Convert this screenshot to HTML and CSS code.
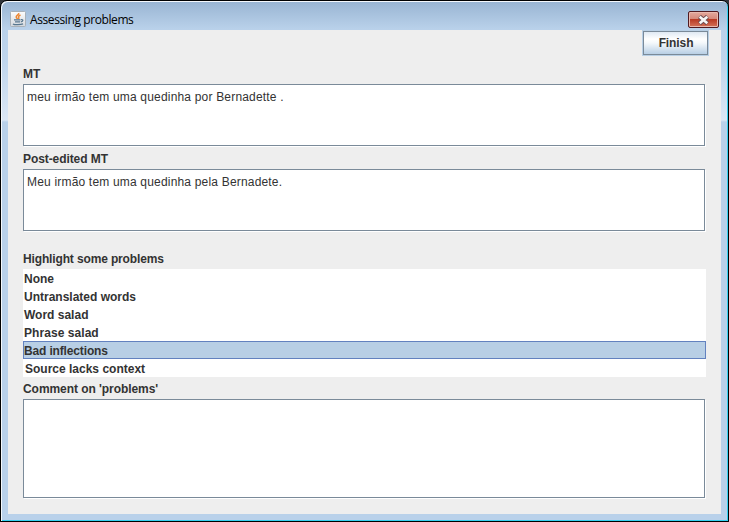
FILE: index.html
```html
<!DOCTYPE html>
<html lang="en">
<head>
<meta charset="utf-8">
<title>Assessing problems</title>
<link rel="stylesheet" href="styles.css">
</head>
<body>
<div class="window">
  <header class="titlebar">
    <svg class="app-icon" width="16" height="16" viewBox="0 0 16 16">
      <defs><linearGradient id="tile" x1="0" y1="0" x2="0" y2="1"><stop offset="0" stop-color="#fdfdfd"/><stop offset="1" stop-color="#d3d8dd"/></linearGradient></defs>
      <rect x=".5" y=".5" width="15" height="15" rx="1" fill="url(#tile)" stroke="#a9b1b8"/>
      <path d="M8.700 2c.7 1.700-3 2.500-2.500 4 .2.900 1 1.300 1.300 2M10.500 4c-1.700.8-2.500 1.500-1.700 2.700.3.500 0 .9-.4 1.300" fill="none" stroke="#ed8732" stroke-width="1.500"/>
      <path d="M4 8.900h6.500M5 10.900h5M11 8.600c2.600-.3 2.300 2-.2 2.300M3 12.900c1 .9 8 .9 10 0" fill="none" stroke="#58778f" stroke-width="1.300"/>
    </svg>
    <h1 class="title">Assessing problems</h1>
    <button class="close" aria-label="Close">
      <svg width="13" height="10" viewBox="0 0 13 10"><path d="M2.500 1.500 10.500 8.500M10.500 1.500 2.500 8.500" stroke="#6a4a50" stroke-width="4.400"/><path d="M2.700 1.700 10.300 8.300M10.300 1.700 2.700 8.300" stroke="#f6f6f6" stroke-width="2.600"/></svg>
    </button>
  </header>
  <main class="content">
    <div class="toolbar"><button class="finish"><span>Finish</span></button></div>
    <h2 class="label mt-label">MT</h2>
    <div class="field"><p class="mt-text">meu irmão tem uma quedinha por Bernadette .</p></div>
    <h2 class="label edited-label">Post-edited MT</h2>
    <div class="field"><p class="edited-text">Meu irmão tem uma quedinha pela Bernadete.</p></div>
    <h2 class="label list-label">Highlight some problems</h2>
    <ul class="problems">
      <li>None</li>
      <li>Untranslated words</li>
      <li>Word salad</li>
      <li class="phrase">Phrase salad</li>
      <li class="selected">Bad inflections</li>
      <li class="last">Source lacks context</li>
    </ul>
    <h2 class="label comment-label">Comment on 'problems'</h2>
    <div class="field comment"></div>
  </main>
</div>
</body>
</html>
```
FILE: styles.css
```css
* { box-sizing: border-box; margin: 0; padding: 0; }
html { background: #30343a; }
body {
  width: 729px;
  height: 522px;
  overflow: hidden;
  font: 12px/18px "Liberation Sans", Arial, sans-serif;
  color: #333;
}
.window {
  width: 729px;
  height: 522px;
  border: 1px solid #000;
  border-radius: 7px 7px 0 0;
  padding: 0 7px 7px;
  background: linear-gradient(#98b4d2 0, #b9d1ea 28px, #bfd5ec 60px, #dbe7f5 119px, #b9d1ea 121px);
  box-shadow: inset 1px 1px #f4f8fc, inset -1px -1px #35d0f0;
}
.titlebar { height: 29px; display: flex; align-items: flex-start; padding: 10px 2px 0; }
.app-icon { flex: none; }
.title {
  flex: 1;
  margin-left: 4px;
  font: 12px/17px "Open Sans", "Noto Sans", sans-serif;
  letter-spacing: -.4px;
  color: #000;
}
.close {
  width: 31px;
  height: 17px;
  display: flex;
  align-items: center;
  justify-content: center;
  border: 1px solid #511a20;
  border-radius: 2px;
  background: linear-gradient(#e4a99e 0, #d58778 48%, #b93a24 50%, #d5735a 100%);
  box-shadow: inset 0 0 0 1px #e9b8ae;
}
.content { width: 713px; height: 484px; padding: 0 15px; background: #eee; }
.toolbar { height: 36px; display: flex; justify-content: flex-end; align-items: flex-start; margin-right: -3px; }
.finish {
  width: 67px;
  height: 26px;
  border: 1px solid #b8cfe5;
  background: #7a8a99;
  padding: 1px;
  font: bold 12px/22px "Liberation Sans", Arial, sans-serif;
  letter-spacing: -.1px;
  color: #333;
}
.finish span {
  display: block;
  height: 22px;
  padding-left: 1px;
  background: linear-gradient(#dfe9f3, #fff 32%, #f4f8fb 50%, #b8cfe5);
}
.label { font-size: 12px; line-height: 18px; font-weight: bold; white-space: nowrap; }
.mt-label { height: 18px; line-height: 17px; }
.edited-label { height: 22px; padding-top: 3px; letter-spacing: -.08px; }
.list-label { height: 37px; padding-top: 18px; letter-spacing: -.14px; }
.comment-label { height: 22px; padding-top: 3px; letter-spacing: -.06px; }
.field {
  width: 682px;
  height: 62px;
  margin-bottom: 1px;
  padding: 3px;
  border: 1px solid #7a8a99;
  background: #fff;
  box-shadow: 1px 1px #fff;
  white-space: nowrap;
}
.mt-text, .edited-text { letter-spacing: .185px; }
.comment { height: 99px; }
.problems { list-style: none; width: 683px; background: #fff; }
.problems li { height: 18px; padding: 1px 1px 0; line-height: 18px; font-weight: bold; }
.problems .phrase { letter-spacing: .06px; }
.problems .selected { padding: 0; border: 1px solid #6382bf; background: #b8cfe5; letter-spacing: -.15px; }
.problems .last { padding-left: 2px; }
```
